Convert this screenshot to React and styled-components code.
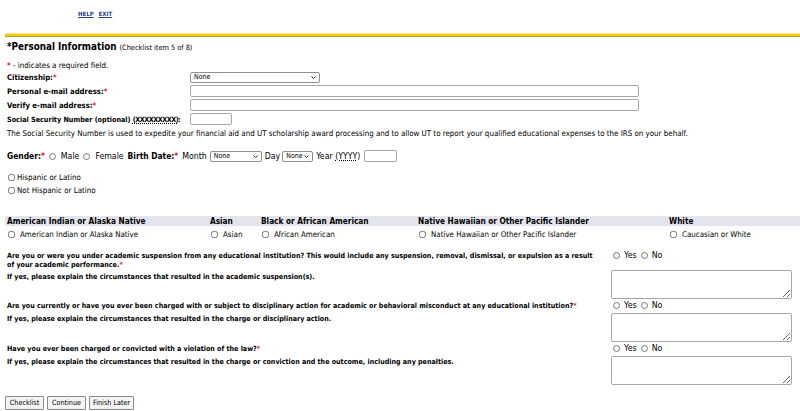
import React from "react";
import styled, { createGlobalStyle } from "styled-components";

const GlobalStyle = createGlobalStyle`
  html, body {
    margin: 0;
    padding: 0;
    background: #fff;
  }
  body {
    font-family: "DejaVu Sans Condensed", "DejaVu Sans", sans-serif;
    font-stretch: condensed;
    font-size: 7.9px;
    color: #000;
  }
`;

const Page = styled.div`
  width: 800px;
  height: 411px;
  overflow: hidden;
  padding: 0 0 0 5px;
  box-sizing: border-box;
`;

const TopLinks = styled.div`
  height: 33px;
  box-sizing: border-box;
  padding: 10px 0 0 73px;
  display: flex;
  gap: 5px;
`;

const NavLink = styled.a`
  font-size: 6px;
  font-weight: bold;
  color: #1f3f9a;
  text-decoration: underline;
`;

const Rule = styled.div`
  height: 2px;
  background: #f2cf10;
  border-top: 1px solid #f5e58a;
  border-bottom: 1px solid #b5a030;
`;

const Title = styled.h1`
  margin: 3px 0 0 2px;
  font-size: 9.8px;
  font-weight: bold;
  line-height: 14px;
`;

const TitleNote = styled.span`
  font-size: 7.3px;
  font-weight: normal;
`;

const Star = styled.span`
  color: #e0141e;
  font-weight: bold;
`;

const Note = styled.div`
  margin: 7px 0 0 2px;
  line-height: 8px;
`;

const FieldRow = styled.div`
  display: grid;
  grid-template-columns: 183px 1fr;
  align-items: center;
  height: 14px;
  padding-left: 2px;
`;

const FieldLabel = styled.label`
  font-weight: bold;
  font-size: ${(p) => p.$size || 7.7}px;
  white-space: nowrap;
`;

const Abbr = styled.abbr`
  text-decoration: underline dotted;
  text-underline-offset: 1px;
  letter-spacing: ${(p) => p.$ls || 0}px;
`;

const SelectWrap = styled.span`
  position: relative;
  display: inline-block;
  width: ${(p) => p.$w}px;
  height: 11px;
  margin: ${(p) => p.$m || "0"};
`;

const Select = styled.select`
  appearance: none;
  font: inherit;
  font-size: 7px;
  width: 100%;
  height: 100%;
  padding: 0 0 0 3px;
  border: 1px solid #8f8f8f;
  border-radius: 2px;
  background: #fff;
  color: #000;
  box-sizing: border-box;
  display: block;
`;

const Chevron = styled.svg`
  position: absolute;
  right: 4px;
  top: 4px;
  width: 5px;
  height: 3px;
  pointer-events: none;
`;

const Dropdown = ({ w, m }) => (
  <SelectWrap $w={w} $m={m}>
    <Select>
      <option>None</option>
    </Select>
    <Chevron viewBox="0 0 5 3">
      <path d="M0.5 0.5 L2.5 2.5 L4.5 0.5" fill="none" stroke="#222" strokeWidth="1" />
    </Chevron>
  </SelectWrap>
);

const TextInput = styled.input`
  width: ${(p) => p.$w}px;
  height: 12px;
  padding: 0;
  margin: ${(p) => p.$m || "0"};
  border: 1px solid #a8a8a8;
  border-radius: 2px;
  box-sizing: border-box;
  font: inherit;
`;

const Para = styled.p`
  margin: 3px 0 0 2px;
  line-height: 10px;
  white-space: nowrap;
`;

const GenderRow = styled.div`
  display: flex;
  align-items: center;
  margin: 10px 0 0 2px;
  height: 14px;
  white-space: nowrap;
  font-size: 8.7px;
`;

const Bold = styled.b`
  font-weight: bold;
  font-size: 8.4px;
  margin: 0 ${(p) => p.$r || 0}px 0 ${(p) => p.$l || 0}px;
`;

const Radio = styled.input.attrs({ type: "radio" })`
  width: 7px;
  height: 7px;
  margin: 0 ${(p) => p.$r ?? 5}px 0 ${(p) => p.$l ?? 4}px;
`;

const Check = styled.input.attrs({ type: "checkbox" })`
  width: 7px;
  height: 7px;
  margin: 0 ${(p) => p.$r ?? 2}px 0 0;
`;

const CheckList = styled.div`
  margin: 10px 0 0 3px;
  display: flex;
  flex-direction: column;
  gap: 4px;
`;

const CheckItem = styled.label`
  display: flex;
  align-items: center;
  height: 9px;
`;

const RaceTable = styled.div`
  margin-top: 21px;
  display: grid;
  grid-template-columns: 203px 51px 157px 251px 1fr;
`;

const RaceHead = styled.div`
  background: #e4e4ee;
  font-weight: bold;
  font-size: 8.2px;
  padding: 1px 2px;
  line-height: 8px;
  white-space: nowrap;
`;

const RaceCell = styled.label`
  display: flex;
  align-items: center;
  padding: 3px 0 0 3px;
  height: 10px;
  white-space: nowrap;
`;

const Question = styled.div`
  display: grid;
  grid-template-columns: 604px 181px;
  row-gap: ${(p) => p.$gap}px;
  margin-top: ${(p) => p.$top}px;
  padding-left: 2px;
  font-weight: bold;
  font-size: 7.1px;
  line-height: 9px;
`;

const QuestionText = styled.div`
  padding-right: 14px;
`;

const Answers = styled.div`
  display: flex;
  align-items: center;
  height: 9px;
  font-weight: normal;
  font-size: 8.8px;
  & > label {
    display: flex;
    align-items: center;
  }
`;

const Explain = styled.div`
  padding-top: ${(p) => p.$pad}px;
`;

const Area = styled.textarea`
  width: 181px;
  height: 29px;
  border: 1px solid #a8a8a8;
  border-radius: 2px;
  box-sizing: border-box;
  margin: 0;
  display: block;
`;

const Buttons = styled.div`
  display: flex;
  gap: 3px;
  margin-top: 11px;
`;

const Button = styled.button`
  font: inherit;
  font-size: 7.2px;
  min-width: 39px;
  height: 14px;
  padding: 0 3px;
  background: #f4f4f4;
  border: 1px solid #8a8a8a;
  border-radius: 1px;
  color: #000;
  line-height: 10px;
`;

const YesNo = () => (
  <Answers>
    <label>
      <Radio $l={2} $r={4} />
      Yes
    </label>
    <label>
      <Radio $l={4} $r={4} />
      No
    </label>
  </Answers>
);

const races = [
  ["American Indian or Alaska Native", "American Indian or Alaska Native"],
  ["Asian", "Asian"],
  ["Black or African American", "African American"],
  ["Native Hawaiian or Other Pacific Islander", "Native Hawaiian or Other Pacific Islander"],
  ["White", "Caucasian or White"],
];

const questions = [
  {
    q: "Are you or were you under academic suspension from any educational institution? This would include any suspension, removal, dismissal, or expulsion as a result of your academic performance.",
    explain: "If yes, please explain the circumstances that resulted in the academic suspension(s).",
    top: 12,
    gap: 1,
    pad: 2,
  },
  {
    q: "Are you currently or have you ever been charged with or subject to disciplinary action for academic or behavioral misconduct at any educational institution?",
    explain: "If yes, please explain the circumstances that resulted in the charge or disciplinary action.",
    top: 2,
    gap: 3,
    pad: 1,
  },
  {
    q: "Have you ever been charged or convicted with a violation of the law?",
    explain: "If yes, please explain the circumstances that resulted in the charge or conviction and the outcome, including any penalties.",
    top: 2,
    gap: 3,
    pad: 1,
  },
];

export default function App() {
  return (
    <Page>
      <GlobalStyle />
      <TopLinks>
        <NavLink>HELP</NavLink>
        <NavLink>EXIT</NavLink>
      </TopLinks>
      <Rule />
      <Title>
        *Personal Information <TitleNote>(Checklist item 5 of 8)</TitleNote>
      </Title>
      <Note>
        <Star>*</Star> - indicates a required field.
      </Note>
      <FieldRow>
        <FieldLabel>
          Citizenship:<Star>*</Star>
        </FieldLabel>
        <Dropdown w={130} />
      </FieldRow>
      <FieldRow>
        <FieldLabel>
          Personal e-mail address:<Star>*</Star>
        </FieldLabel>
        <TextInput $w={449} />
      </FieldRow>
      <FieldRow>
        <FieldLabel>
          Verify e-mail address:<Star>*</Star>
        </FieldLabel>
        <TextInput $w={449} />
      </FieldRow>
      <FieldRow>
        <FieldLabel $size={7.2}>
          Social Security Number (optional) <Abbr $ls={-0.5}>(XXXXXXXXX)</Abbr>:
        </FieldLabel>
        <TextInput $w={42} />
      </FieldRow>
      <Para>
        The Social Security Number is used to expedite your financial aid and UT scholarship award
        processing and to allow UT to report your qualified educational expenses to the IRS on your
        behalf.
      </Para>
      <GenderRow>
        <Bold>
          Gender:<Star>*</Star>
        </Bold>
        <Radio />
        Male
        <Radio />
        Female
        <Bold $l={4} $r={4}>
          Birth Date:<Star>*</Star>
        </Bold>
        Month
        <Dropdown w={52} m="0 3px" />
        Day
        <Dropdown w={31} m="0 3px 0 2px" />
        Year&nbsp;<Abbr>(YYYY)</Abbr>
        <TextInput $w={33} $m="0 0 0 4px" />
      </GenderRow>
      <CheckList>
        <CheckItem>
          <Check />
          Hispanic or Latino
        </CheckItem>
        <CheckItem>
          <Check />
          Not Hispanic or Latino
        </CheckItem>
      </CheckList>
      <RaceTable>
        {races.map(([head]) => (
          <RaceHead key={head}>{head}</RaceHead>
        ))}
        {races.map(([, label]) => (
          <RaceCell key={label}>
            <Check $r={5} />
            {label}
          </RaceCell>
        ))}
      </RaceTable>
      {questions.map((item) => (
        <Question key={item.q} $top={item.top} $gap={item.gap}>
          <QuestionText>
            {item.q}
            <Star>*</Star>
          </QuestionText>
          <YesNo />
          <Explain $pad={item.pad}>{item.explain}</Explain>
          <Area />
        </Question>
      ))}
      <Buttons>
        <Button>Checklist</Button>
        <Button>Continue</Button>
        <Button>Finish Later</Button>
      </Buttons>
    </Page>
  );
}
